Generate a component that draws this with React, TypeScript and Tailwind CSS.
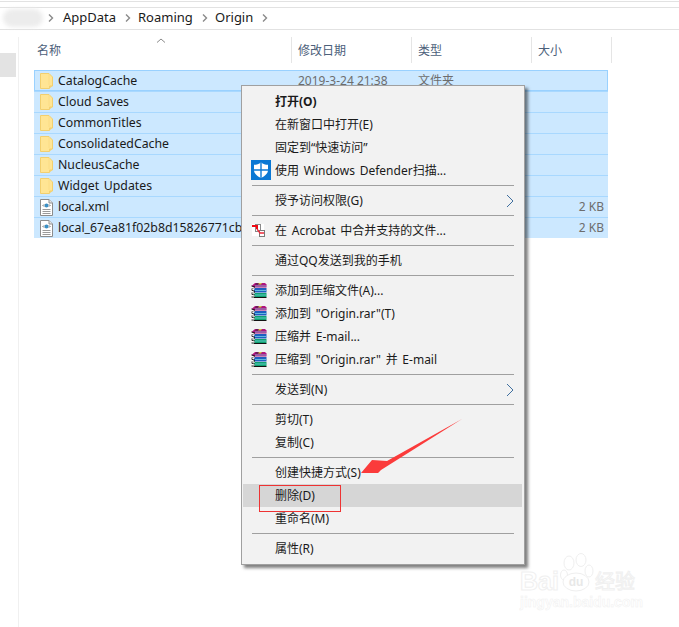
const files = [
  { name: 'CatalogCache', folder: true, date: '2019-3-24 21:38', type: '文件夹', size: '' },
  { name: 'Cloud Saves', folder: true, date: '', type: '', size: '' },
  { name: 'CommonTitles', folder: true, date: '', type: '', size: '' },
  { name: 'ConsolidatedCache', folder: true, date: '', type: '', size: '' },
  { name: 'NucleusCache', folder: true, date: '', type: '', size: '' },
  { name: 'Widget Updates', folder: true, date: '', type: '', size: '' },
  { name: 'local.xml', folder: false, date: '', type: '', size: '2 KB' },
  { name: 'local_67ea81f02b8d15826771cb', folder: false, date: '', type: '', size: '2 KB' },
]

type MenuRow = {
  label?: string
  icon?: 'defender' | 'acrobat' | 'rar'
  bold?: boolean
  arrow?: boolean
  active?: boolean
}

const menu: MenuRow[] = [
  { label: '打开(O)', bold: true },
  { label: '在新窗口中打开(E)' },
  { label: '固定到“快速访问”' },
  { label: '使用 Windows Defender扫描...', icon: 'defender' },
  {},
  { label: '授予访问权限(G)', arrow: true },
  {},
  { label: '在 Acrobat 中合并支持的文件...', icon: 'acrobat' },
  {},
  { label: '通过QQ发送到我的手机' },
  {},
  { label: '添加到压缩文件(A)...', icon: 'rar' },
  { label: '添加到 "Origin.rar"(T)', icon: 'rar' },
  { label: '压缩并 E-mail...', icon: 'rar' },
  { label: '压缩到 "Origin.rar" 并 E-mail', icon: 'rar' },
  {},
  { label: '发送到(N)', arrow: true },
  {},
  { label: '剪切(T)' },
  { label: '复制(C)' },
  {},
  { label: '创建快捷方式(S)' },
  { label: '删除(D)', active: true },
  { label: '重命名(M)' },
  {},
  { label: '属性(R)' },
]

function FolderIcon() {
  return (
    <svg width="13" height="16" viewBox="0 0 13 16" className="shrink-0">
      <path d="M0.5 0.5 H9 L12.5 4 V13 H9.5 V15.5 H0.5 Z" fill="#ffe594" stroke="#f2cf6e" />
      <path d="M9.5 13 L12.5 13 L9.5 15.5 Z" fill="#f5d272" />
      <path d="M9 1 V12" stroke="#fbdc84" />
    </svg>
  )
}

function XmlIcon() {
  return (
    <svg width="15" height="17" viewBox="0 0 15 17" className="-ml-px shrink-0">
      <path d="M1.5 0.5 H10 L13.5 4 V16.5 H1.5 Z" fill="#fff" stroke="#8c8c8c" />
      <path d="M10 0.5 V4 H13.5" fill="#e8e8e8" stroke="#8c8c8c" />
      <circle cx="7.5" cy="6.5" r="2" fill="#3a8fc4" />
      <path d="M4 6.5 L5 5.5 M4 6.5 L5 7.5 M11 6.5 L10 5.5 M11 6.5 L10 7.5" stroke="#555" />
      <path d="M3.5 10.5 H11.5 M3.5 12.5 H11.5 M3.5 14.5 H11.5" stroke="#9a9a9a" />
    </svg>
  )
}

function DefenderIcon() {
  return (
    <svg width="20" height="20" viewBox="0 0 20 20" className="absolute left-[8px] top-[1px]">
      <rect width="20" height="20" fill="#0a78d4" />
      <path d="M10 2.5 C12 4 14.5 4.8 17 4.8 V10 C17 13.5 14 16.2 10 17.8 C6 16.2 3 13.5 3 10 V4.8 C5.5 4.8 8 4 10 2.5 Z" fill="#fff" />
      <path d="M10 2.5 V17.8 M3 10 H17" stroke="#0a78d4" strokeWidth="1.4" />
    </svg>
  )
}

function AcrobatIcon() {
  return (
    <svg width="13" height="13" viewBox="0 0 13 13" className="absolute left-[9px] top-[5px]">
      <rect x="0" y="0" width="12" height="12" fill="#fff" />
      <rect x="3.5" y="0.5" width="5" height="7" fill="#fff" stroke="#8a8a8a" />
      <rect x="7.5" y="6.5" width="5" height="6" fill="#fff" stroke="#7a7a7a" />
      <path d="M0 2 H5 V5" stroke="#ee0a14" strokeWidth="2" fill="none" />
      <path d="M5 5 L8 9 H12" stroke="#ee2a3a" strokeWidth="1.3" fill="none" />
    </svg>
  )
}

function RarIcon() {
  return (
    <svg width="17" height="16" viewBox="0 0 17 16" className="absolute left-[8px] top-[3px]">
      <path d="M0.5 4 L4 1 H14 L15.5 2.5 V5.5 H3 Z" fill="#b0147f" />
      <path d="M5 1 H11 L9 3 H4 Z" fill="#6e1a5a" />
      <path d="M8 1 L11 1 L10 2.5 H7 Z" fill="#d8c24a" />
      <path d="M3 6 H15.5 V10.5 H3 Z" fill="#1d5fc0" />
      <path d="M3 11 H15.5 V15 H3 Z" fill="#10a070" />
      <path d="M4 4 H15 M4 8.5 H15 M4 13 H15" stroke="#7fe0ee" strokeWidth="0.7" />
      <path d="M0.5 4 L4 5 M0.5 7 L4 6 M0.5 8 L4 9.5 M0.5 11 L4 10.5 M0.5 12 L4 13.5 M0.5 15 L4 15" stroke="#1a1a1a" strokeWidth="1" />
      <path d="M0.5 5.5 L4 7 M0.5 9.5 L4 11.5 M0.5 13.5 L4 14" stroke="#fff" strokeWidth="0.8" />
      <path d="M3 15.5 H15.5" stroke="#111" />
    </svg>
  )
}

function Chevron() {
  return (
    <svg width="8" height="14" viewBox="0 0 8 14" className="absolute right-[8px] top-[5px]">
      <path d="M1 1 L7 7 L1 13" fill="none" stroke="#3f6f9f" strokeWidth="1" />
    </svg>
  )
}

function Crumb() {
  return (
    <svg width="6" height="8" viewBox="0 0 6 8" className="shrink-0">
      <path d="M1 0.5 L4.5 4 L1 7.5" fill="none" stroke="#8a8a8a" strokeWidth="1.4" />
    </svg>
  )
}

function ContextMenu() {
  return (
    <div className="absolute left-[241px] top-[85px] w-[284px] border border-[#a0a0a0] bg-[#f2f2f2] pl-px pr-[2px] pt-[4px] pb-[4px] shadow-[3px_3px_3px_rgba(0,0,0,0.5)] text-[12px] text-[#1a1a1a] [word-spacing:1.6px]">
      {menu.map((row, i) =>
        row.label ? (
          <div
            key={i}
            className={`relative flex h-[23px] items-center pl-[32px] ${row.active ? 'bg-[#d6d6d6]' : ''} ${row.bold ? 'font-bold' : ''}`}
          >
            {row.icon === 'defender' && <DefenderIcon />}
            {row.icon === 'acrobat' && <AcrobatIcon />}
            {row.icon === 'rar' && <RarIcon />}
            <span>{row.label}</span>
            {row.arrow && <Chevron />}
          </div>
        ) : (
          <div key={i} className="flex h-[7px] items-center pl-[9px] pr-[8px]">
            <div className="h-px w-full bg-[#a0a0a0]" />
          </div>
        ),
      )}
    </div>
  )
}

export default function App() {
  return (
    <div className="relative h-[627px] w-[679px] overflow-hidden bg-white font-['Noto_Sans','Noto_Sans_CJK_SC',sans-serif] text-[12px] text-[#1a1a1a]">
      <div className="mt-px h-px bg-[#e2e2e2]" />
      <div className="mt-[5px] flex h-[23px] items-center border-y border-[#e2e2e2] pb-[2px] text-[13px]">
        <div className="ml-[3px] h-[18px] w-[40px] rounded-full bg-[#ececec] blur-[2px]" />
        <div className="ml-[5px] flex items-center">
          <Crumb />
          <span className="ml-[9px] w-[51px]">AppData</span>
          <span className="ml-[11px]"><Crumb /></span>
          <span className="ml-[7px] w-[52px]">Roaming</span>
          <span className="ml-[12px]"><Crumb /></span>
          <span className="ml-[7px] w-[37px]">Origin</span>
          <span className="ml-[10px]"><Crumb /></span>
        </div>
      </div>

      <div className="flex">
        <div className="mt-[7px] h-[590px] w-[19px] border-r border-[#f0f0f0]">
          <div className="mt-[16px] h-[24px] w-[16px] bg-[#e3e3e3]" />
        </div>
        <div className="flex-1 pt-[7px]">
          <div className="relative flex h-[26px] items-center text-[#4c607a]">
            <svg width="10" height="5" viewBox="0 0 10 5" className="absolute left-[137px] top-[1px]">
              <path d="M1 4.5 L5 1 L9 4.5" fill="none" stroke="#8a8a8a" />
            </svg>
            <div className="h-[26px] w-[273px] border-r border-[#e5e5e5] pl-[18px] pt-[5px] leading-[18px]">名称</div>
            <div className="h-[26px] w-[120px] border-r border-[#e5e5e5] pl-[6px] pt-[5px] leading-[18px]">修改日期</div>
            <div className="h-[26px] w-[120px] border-r border-[#e5e5e5] pl-[6px] pt-[5px] leading-[18px]">类型</div>
            <div className="h-[26px] w-[80px] border-r border-[#e5e5e5] pl-[6px] pt-[5px] leading-[18px]">大小</div>
          </div>
          <div className="ml-[15px] mt-[7px] w-[574px]">
            {files.map((f, i) => (
              <div
                key={f.name}
                className={`flex h-[21px] items-center bg-[#cce8ff] ${i === 0 ? 'border border-[#99d1ff] pl-[5px] pt-px' : 'border-t border-[#a8d8ff] pl-[6px]'}`}
              >
                <div className="flex w-[18px] justify-start">{f.folder ? <FolderIcon /> : <XmlIcon />}</div>
                <span className="w-[240px] whitespace-nowrap text-[12.3px] [word-spacing:1.5px]">{f.name}</span>
                <span className="w-[120px] text-[#6d6d6d]">{f.date}</span>
                <span className="w-[120px] text-[#6d6d6d]">{f.type}</span>
                <span className="w-[66px] text-right text-[#6d6d6d]">{f.size}</span>
              </div>
            ))}
          </div>
        </div>
      </div>

      <ContextMenu />

      <svg width="110" height="60" viewBox="0 0 110 60" className="absolute left-[358px] top-[416px]">
        <path d="M104 3 L29 45 L14 44 L3 57 L20 57 L23 54 Z" fill="#fb3b3b" />
      </svg>
      <div className="absolute left-[259px] top-[485px] h-[27px] w-[82px] border border-[#ee3333]" />

      <div className="absolute left-[520px] top-[553px] w-[125px] text-white">
        <div className="flex h-[40px] items-end font-['Liberation_Sans',sans-serif] text-[25px] font-bold leading-[24px] [-webkit-text-stroke:1px_#f0f0f0]">
          <span>Bai</span>
          <svg width="36" height="40" viewBox="0 0 36 40" className="shrink-0">
            <g fill="#fff" stroke="#efefef">
              <ellipse cx="10" cy="10" rx="5" ry="7" />
              <ellipse cx="22" cy="7" rx="5" ry="6.5" />
              <ellipse cx="30" cy="18" rx="4" ry="6" />
              <ellipse cx="5" cy="22" rx="3.5" ry="5" />
              <ellipse cx="17" cy="29" rx="13" ry="9" />
            </g>
            <text x="17" y="33" textAnchor="middle" fontSize="12" fontWeight="bold" fill="#e8e8e8" stroke="none">du</text>
          </svg>
          <span className="font-['Noto_Sans_CJK_SC',sans-serif] text-[20px] font-normal">经验</span>
        </div>
        <div className="mt-[1px] font-['Liberation_Sans',sans-serif] text-[14px] font-bold leading-[16px] whitespace-nowrap [-webkit-text-stroke:0.5px_#f0f0f0]">jingyan.baidu.com</div>
      </div>
    </div>
  )
}
